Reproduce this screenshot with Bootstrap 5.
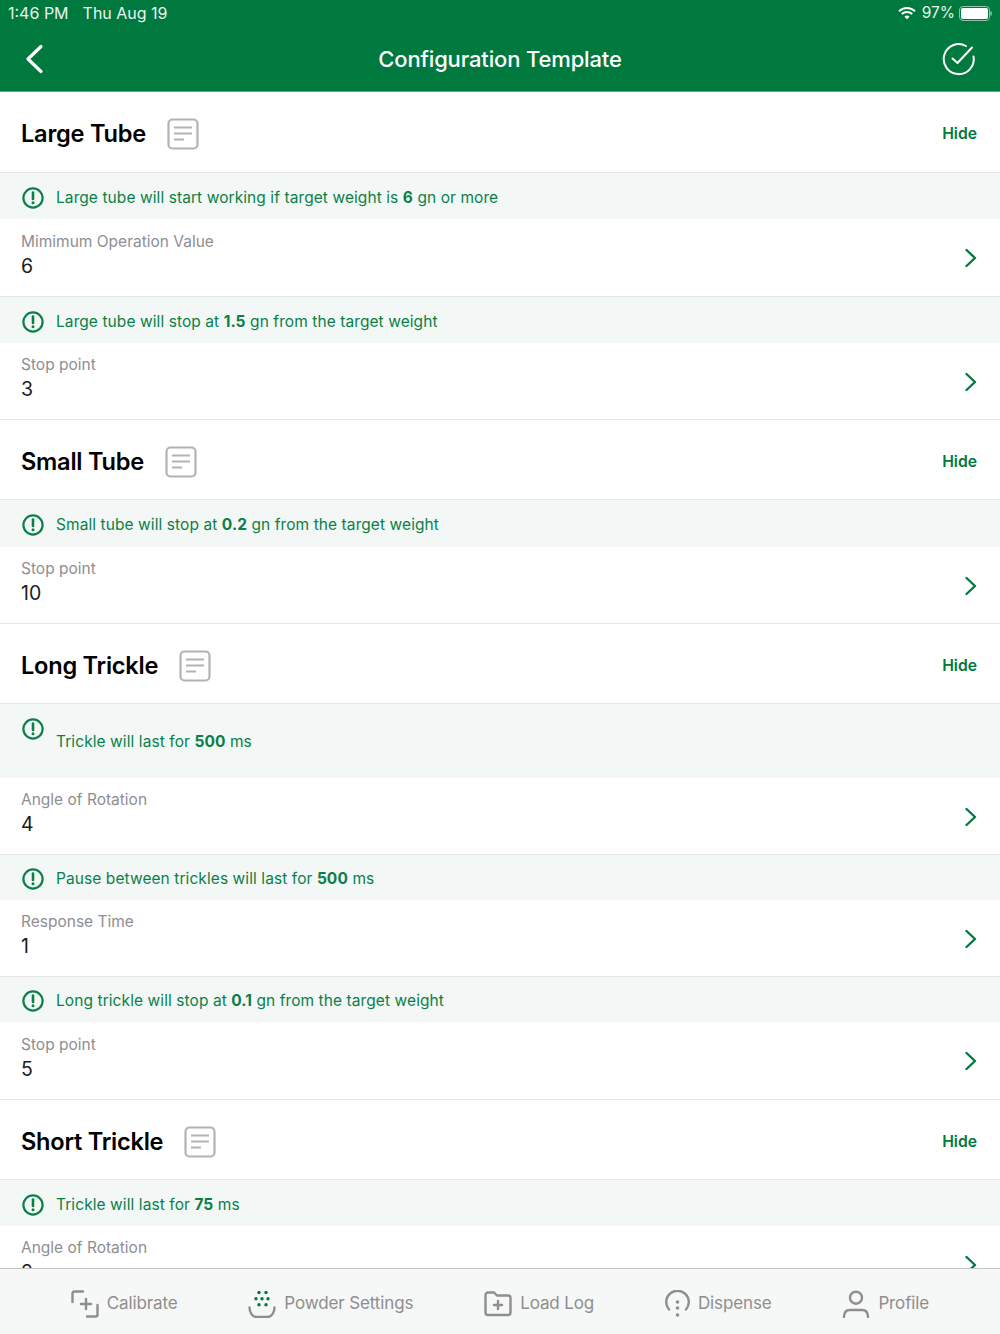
<!DOCTYPE html>
<html lang="en"><head><meta charset="utf-8"><title>Configuration Template</title>
<link href="https://cdn.jsdelivr.net/npm/bootstrap@5.3.0/dist/css/bootstrap.min.css" rel="stylesheet">
<style>
html,body{height:1334px;overflow:hidden;background:#fff}
body{font-family:Inter,"Liberation Sans",sans-serif;color:#1c1c1e}
.app-shell{height:1334px}
.top-area{background:#00793f;color:#fff;height:92px;border-bottom:1px solid #5fa883;flex:none}
.status-line{height:26px;padding:0 8px;font-size:16px;line-height:26px;color:#eaf4ee}
.status-line .dt{margin-left:14px}
.status-pct{font-size:15.5px}
.wifi-mark{margin-right:6px}
.title-line{height:65px;padding:0 24px}
.title-side{flex:1 1 0}
.page-title{font-size:22px;font-weight:500;margin:0;line-height:1;letter-spacing:-.15px}
.scroll-area{flex:1 1 0;min-height:0;overflow:hidden}
.sec-head{height:80px;padding:4px 23px 0 21px;border-bottom:1px solid #e6e6e8}
.sec-head.tall-head{height:81px}
.sec-title{font-size:23.6px;font-weight:600;color:#000;margin:0;letter-spacing:-.25px;line-height:1}
.sec-title+svg{margin-left:21px}
.hide-link{font-size:15.7px;font-weight:600;color:#00793f;text-decoration:none}
.note-bar{background:#f3f8f6;color:#0a8048;height:46px;padding:3px 0 0 22px;font-size:15.5px;letter-spacing:.08px}
.note-bar.slim{height:45px}
.note-bar.wide{height:47px}
.note-bar svg{margin-right:12px;flex:none}
.note-bar b{font-weight:700}
.note-bar.tall{height:74px;align-items:flex-start!important;padding-top:14px}
.note-bar.tall span{margin-top:12px}
.val-row{height:77px;padding:0 23px 0 21px;border-bottom:1px solid #e6e6e8}
.val-row.wide{height:78px}
.val-text{margin-bottom:5px}
.val-row svg{margin-top:1px}
.val-label{font-size:15.5px;color:#8e8e93;line-height:20px}
.val-num{font-size:19.5px;color:#1c1c1e;line-height:26px;margin-top:1px}
.tab-strip{height:66px;flex:none;background:#f6f7f7;border-top:1px solid #c4c4c6;color:#8e8e8e;font-size:17px;padding-top:4px;letter-spacing:-.12px}
.tab-item{gap:8px}
</style></head>
<body>
<svg width="0" height="0" class="position-absolute">
<defs>
<symbol id="i-doc" viewBox="0 0 32 32"><rect x="1.500" y="1.500" width="29" height="29" rx="4" fill="none" stroke="#b3b3b6" stroke-width="2.200"/><path d="M7 9.500h18M7 15.500h18M7 21.500h10" stroke="#b3b3b6" stroke-width="2.200" fill="none"/></symbol>
<symbol id="i-alert" viewBox="0 0 22 22"><circle cx="11" cy="11" r="9.600" fill="none" stroke="#0a8048" stroke-width="2.200"/><path d="M11 5.500v6.500" stroke="#0a8048" stroke-width="2.600" stroke-linecap="round"/><circle cx="11" cy="15.800" r="1.500" fill="#0a8048"/></symbol>
<symbol id="i-chev" viewBox="0 0 14 20"><path d="M3.500 2l8.500 8-8.500 8" fill="none" stroke="#00793f" stroke-width="2.400" stroke-linecap="round" stroke-linejoin="round"/></symbol>
</defs></svg>
<div class="app-shell d-flex flex-column">
 <header class="top-area">
  <div class="status-line d-flex justify-content-between">
   <div><span>1:46 PM</span><span class="dt">Thu Aug 19</span></div>
   <div class="d-flex align-items-center">
    <svg width="18" height="14" viewBox="0 0 18 14" class="wifi-mark"><path d="M1 5.200a11.500 11.500 0 0 1 16 0" fill="none" stroke="#fff" stroke-width="2"/><path d="M3.800 8a7.500 7.500 0 0 1 10.400 0" fill="none" stroke="#fff" stroke-width="2"/><path d="M6.400 10.700a3.700 3.700 0 0 1 5.200 0L9 13.300z" fill="#fff"/></svg>
    <span class="status-pct">97%</span>
    <svg width="33" height="15" viewBox="0 0 33 15" class="ms-1"><rect x=".5" y=".5" width="30" height="14" rx="3.500" fill="none" stroke="#8fc4a8"/><rect x="2" y="2" width="27" height="11" rx="2" fill="#fff"/><path d="M32 5.500v4" stroke="#8fc4a8" stroke-width="1.500"/></svg>
   </div>
  </div>
  <div class="title-line d-flex align-items-center">
   <div class="title-side d-flex"><svg width="20" height="30" viewBox="0 0 20 30"><path d="M17 2.500 4 15l13 12.500" fill="none" stroke="#fff" stroke-width="3.200" stroke-linecap="round" stroke-linejoin="round"/></svg></div>
   <h1 class="page-title">Configuration Template</h1>
   <div class="title-side d-flex justify-content-end"><svg width="34" height="34" viewBox="0 0 34 34"><path d="M31.500 14.500A15 15 0 1 1 24 4" fill="none" stroke="#fff" stroke-width="2" stroke-linecap="round"/><path d="M10.500 16.500l5 4.500L30 5.500" fill="none" stroke="#fff" stroke-width="2" stroke-linecap="round" stroke-linejoin="round"/></svg></div>
  </div>
 </header>
 <main class="scroll-area">
  <div class="sec-head tall-head d-flex align-items-center"><h2 class="sec-title">Large Tube</h2><svg width="32" height="32"><use href="#i-doc"/></svg><a href="#" class="hide-link ms-auto">Hide</a></div>
  <div class="note-bar d-flex align-items-center"><svg width="22" height="22"><use href="#i-alert"/></svg><span>Large tube will start working if target weight is <b>6</b> gn or more</span></div>
  <div class="val-row wide d-flex align-items-center justify-content-between"><div class="val-text"><div class="val-label">Mimimum Operation Value</div><div class="val-num">6</div></div><svg width="14" height="20"><use href="#i-chev"/></svg></div>
  <div class="note-bar d-flex align-items-center"><svg width="22" height="22"><use href="#i-alert"/></svg><span>Large tube will stop at <b>1.5</b> gn from the target weight</span></div>
  <div class="val-row d-flex align-items-center justify-content-between"><div class="val-text"><div class="val-label">Stop point</div><div class="val-num">3</div></div><svg width="14" height="20"><use href="#i-chev"/></svg></div>

  <div class="sec-head d-flex align-items-center"><h2 class="sec-title">Small Tube</h2><svg width="32" height="32"><use href="#i-doc"/></svg><a href="#" class="hide-link ms-auto">Hide</a></div>
  <div class="note-bar wide d-flex align-items-center"><svg width="22" height="22"><use href="#i-alert"/></svg><span>Small tube will stop at <b>0.2</b> gn from the target weight</span></div>
  <div class="val-row d-flex align-items-center justify-content-between"><div class="val-text"><div class="val-label">Stop point</div><div class="val-num">10</div></div><svg width="14" height="20"><use href="#i-chev"/></svg></div>

  <div class="sec-head d-flex align-items-center"><h2 class="sec-title">Long Trickle</h2><svg width="32" height="32"><use href="#i-doc"/></svg><a href="#" class="hide-link ms-auto">Hide</a></div>
  <div class="note-bar tall d-flex align-items-center"><svg width="22" height="22"><use href="#i-alert"/></svg><span>Trickle will last for <b>500</b> ms</span></div>
  <div class="val-row d-flex align-items-center justify-content-between"><div class="val-text"><div class="val-label">Angle of Rotation</div><div class="val-num">4</div></div><svg width="14" height="20"><use href="#i-chev"/></svg></div>
  <div class="note-bar slim d-flex align-items-center"><svg width="22" height="22"><use href="#i-alert"/></svg><span>Pause between trickles will last for <b>500</b> ms</span></div>
  <div class="val-row d-flex align-items-center justify-content-between"><div class="val-text"><div class="val-label">Response Time</div><div class="val-num">1</div></div><svg width="14" height="20"><use href="#i-chev"/></svg></div>
  <div class="note-bar slim d-flex align-items-center"><svg width="22" height="22"><use href="#i-alert"/></svg><span>Long trickle will stop at <b>0.1</b> gn from the target weight</span></div>
  <div class="val-row wide d-flex align-items-center justify-content-between"><div class="val-text"><div class="val-label">Stop point</div><div class="val-num">5</div></div><svg width="14" height="20"><use href="#i-chev"/></svg></div>

  <div class="sec-head d-flex align-items-center"><h2 class="sec-title">Short Trickle</h2><svg width="32" height="32"><use href="#i-doc"/></svg><a href="#" class="hide-link ms-auto">Hide</a></div>
  <div class="note-bar d-flex align-items-center"><svg width="22" height="22"><use href="#i-alert"/></svg><span>Trickle will last for <b>75</b> ms</span></div>
  <div class="val-row d-flex align-items-center justify-content-between"><div class="val-text"><div class="val-label">Angle of Rotation</div><div class="val-num">2</div></div><svg width="14" height="20"><use href="#i-chev"/></svg></div>
 </main>
 <nav class="tab-strip d-flex align-items-center justify-content-evenly">
  <div class="tab-item d-flex align-items-center"><svg width="28" height="28" viewBox="0 0 28 28" fill="none" stroke="#8e8e8e" stroke-width="2.400" stroke-linecap="round"><path d="M1.500 12V3.500a2 2 0 0 1 2-2H12M26.500 15v9.500a2 2 0 0 1-2 2H16M10 14h10M15 9v10"/></svg><span>Calibrate</span></div>
  <div class="tab-item d-flex align-items-center"><svg width="28" height="28" viewBox="0 0 28 28"><path d="M1.500 17.500c0 5 3 9.500 7 9.500h11c4 0 7-4.500 7-9.500" fill="none" stroke="#8e8e8e" stroke-width="2.400" stroke-linecap="round"/><g fill="#00793f"><circle cx="11" cy="2.500" r="1.700"/><circle cx="18" cy="2.500" r="1.700"/><circle cx="8" cy="8.700" r="1.700"/><circle cx="14" cy="8.700" r="1.700"/><circle cx="20" cy="8.700" r="1.700"/><circle cx="11" cy="14.700" r="1.700"/><circle cx="18" cy="14.700" r="1.700"/></g></svg><span>Powder Settings</span></div>
  <div class="tab-item d-flex align-items-center"><svg width="28" height="26" viewBox="0 0 28 26" fill="none" stroke="#8e8e8e" stroke-width="2.400" stroke-linecap="round" stroke-linejoin="round"><path d="M1.500 4a2.500 2.500 0 0 1 2.500-2.500h6l3 3h11a2.500 2.500 0 0 1 2.500 2.500v14.500a2.500 2.500 0 0 1-2.500 2.500H4a2.500 2.500 0 0 1-2.500-2.500z"/><path d="M14 10v8M10 14h8"/></svg><span>Load Log</span></div>
  <div class="tab-item d-flex align-items-center"><svg width="25" height="28" viewBox="0 0 25 28"><path d="M4 19.500A11.300 11.300 0 1 1 21 19.500" fill="none" stroke="#8e8e8e" stroke-width="2.400" stroke-linecap="round"/><g fill="#8e8e8e"><circle cx="12.500" cy="12" r="1.800"/><circle cx="12.500" cy="18" r="1.800"/><circle cx="12.500" cy="25" r="1.800"/></g></svg><span>Dispense</span></div>
  <div class="tab-item d-flex align-items-center"><svg width="28" height="28" viewBox="0 0 28 28" fill="none" stroke="#8e8e8e" stroke-width="2.400" stroke-linecap="round"><circle cx="14" cy="7.700" r="6"/><path d="M2 27c0-4 2-7 6-7h12c4 0 6 3 6 7"/></svg><span>Profile</span></div>
 </nav>
</div>
</body></html>
